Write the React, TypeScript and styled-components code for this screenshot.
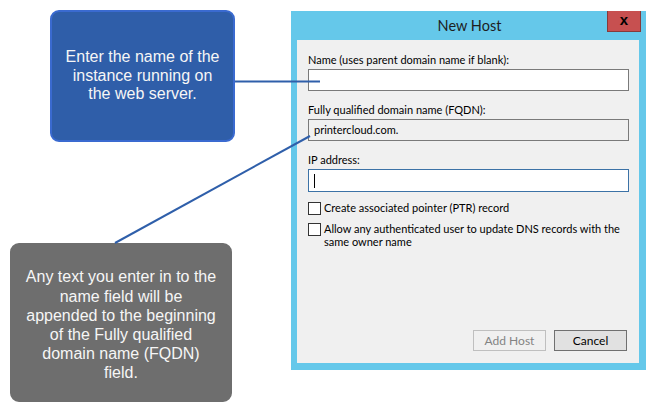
import React from 'react';
import styled, { createGlobalStyle } from 'styled-components';

const GlobalStyle = createGlobalStyle`
    html, body {
        margin: 0;
        padding: 0;
        background: #ffffff;
    }
`;

const Page = styled.div`
    position: relative;
    width: 646px;
    height: 413px;
    display: flex;
    overflow: hidden;
    background: #ffffff;
`;

const Notes = styled.div`
    width: 291px;
    display: flex;
    flex-direction: column;
`;

const Callout = styled.div<{ $tone: 'blue' | 'gray'; $w: number; $h: number; $ml: number; $mt: number }>`
    box-sizing: border-box;
    width: ${({ $w }) => $w}px;
    height: ${({ $h }) => $h}px;
    margin-left: ${({ $ml }) => $ml}px;
    margin-top: ${({ $mt }) => $mt}px;
    border-radius: 9px;
    background: ${({ $tone }) => ($tone === 'blue' ? '#2f5ea9' : '#6e6e6e')};
    border: 2px solid ${({ $tone }) => ($tone === 'blue' ? '#3a6ad0' : '#6e6e6e')};
    display: flex;
    align-items: center;
    justify-content: center;
    text-align: center;
    color: #f6f6f6;
    font-family: "Liberation Sans", Arial, sans-serif;
    font-size: 16px;
    line-height: ${({ $tone }) => ($tone === 'blue' ? '18.5px' : '19.2px')};
    padding-top: ${({ $tone }) => ($tone === 'blue' ? '0' : '5px')};
`;

const Dialog = styled.div`
    box-sizing: border-box;
    margin-top: 11px;
    width: 355px;
    height: 359px;
    background: #65c8ea;
    display: flex;
    flex-direction: column;
    font-family: Lato, "Open Sans", sans-serif;
`;

const TitleBar = styled.div`
    height: 29px;
    display: grid;
    grid-template-columns: 1fr auto 1fr;
    align-items: start;
`;

const Title = styled.div`
    grid-column: 2;
    font-size: 14.5px;
    line-height: 29px;
    color: #1e1e1e;
    padding-left: 2px;
`;

const CloseButton = styled.div`
    grid-column: 3;
    justify-self: end;
    box-sizing: border-box;
    width: 34px;
    height: 21px;
    margin-right: 5px;
    background: #c75050;
    border: 1px solid #873a3a;
    border-top: none;
    display: flex;
    align-items: center;
    justify-content: center;
    color: #000000;
    font-family: "Liberation Sans", Arial, sans-serif;
    font-weight: bold;
    font-size: 15px;
    line-height: 1;
    padding-bottom: 3px;
`;

const Panel = styled.div`
    flex: 1;
    margin: 0 7px 7px 6px;
    background: #f0f0f0;
    display: flex;
    flex-direction: column;
    padding: 12px 10px 12px 11px;
    font-size: 11px;
    color: #000000;
`;

const Label = styled.div<{ $mt?: number }>`
    line-height: 16px;
    margin-top: ${({ $mt }) => $mt ?? 0}px;
    margin-bottom: 1px;
`;

const Field = styled.div<{ $state?: 'normal' | 'readonly' | 'focused' }>`
    box-sizing: border-box;
    height: ${({ $state }) => ($state === 'focused' ? 23 : 22)}px;
    background: ${({ $state }) => ($state === 'readonly' ? '#f0f0f0' : '#ffffff')};
    border: 1px solid ${({ $state }) => ($state === 'focused' ? '#3c72a6' : '#7a7a7a')};
    display: flex;
    align-items: center;
    padding-left: 5px;
    line-height: 16px;
`;

const Caret = styled.span`
    display: block;
    width: 1px;
    height: 14px;
    background: #000000;
`;

const CheckRow = styled.label<{ $mt: number }>`
    display: flex;
    align-items: flex-start;
    gap: 3px;
    margin-top: ${({ $mt }) => $mt}px;
    line-height: 13px;
`;

const CheckText = styled.span`
    margin-top: -1px;
`;

const Box = styled.span`
    box-sizing: border-box;
    flex: none;
    width: 13px;
    height: 13px;
    border: 1px solid #333333;
    background: #ffffff;
`;

const ButtonRow = styled.div`
    margin-top: auto;
    margin-right: 2px;
    display: flex;
    justify-content: flex-end;
    gap: 8px;
`;

const Button = styled.div<{ $disabled?: boolean }>`
    box-sizing: border-box;
    width: 73px;
    height: 21px;
    display: flex;
    align-items: center;
    justify-content: center;
    font-size: 12px;
    background: ${({ $disabled }) => ($disabled ? '#f0f0f0' : '#e1e1e1')};
    border: 1px solid ${({ $disabled }) => ($disabled ? '#bfbfbf' : '#707070')};
    color: ${({ $disabled }) => ($disabled ? '#838383' : '#000000')};
`;

const Connectors = styled.svg`
    position: absolute;
    left: 0;
    top: 0;
    pointer-events: none;
`;

export default function App() {
    return (
        <>
            <GlobalStyle />
            <Page>
                <Notes>
                    <Callout $tone="blue" $w={185} $h={132} $ml={50} $mt={10}>
                        <div>
                            Enter the name of the<br />
                            instance running on<br />
                            the web server.
                        </div>
                    </Callout>
                    <Callout $tone="gray" $w={222} $h={159} $ml={10} $mt={101}>
                        <div>
                            Any text you enter in to the<br />
                            name field will be<br />
                            appended to the beginning<br />
                            of the Fully qualified<br />
                            domain name (FQDN)<br />
                            field.
                        </div>
                    </Callout>
                </Notes>

                <Dialog>
                    <TitleBar>
                        <Title>New Host</Title>
                        <CloseButton>x</CloseButton>
                    </TitleBar>
                    <Panel>
                        <Label>Name (uses parent domain name if blank):</Label>
                        <Field />
                        <Label $mt={11}>Fully qualified domain name (FQDN):</Label>
                        <Field $state="readonly">printercloud.com.</Field>
                        <Label $mt={11}>IP address:</Label>
                        <Field $state="focused">
                            <Caret />
                        </Field>
                        <CheckRow $mt={10}>
                            <Box />
                            <CheckText>Create associated pointer (PTR) record</CheckText>
                        </CheckRow>
                        <CheckRow $mt={8}>
                            <Box />
                            <CheckText>Allow any authenticated user to update DNS records with the same owner name</CheckText>
                        </CheckRow>
                        <ButtonRow>
                            <Button $disabled>Add Host</Button>
                            <Button>Cancel</Button>
                        </ButtonRow>
                    </Panel>
                </Dialog>

                <Connectors width={646} height={413} viewBox="0 0 646 413">
                    <line x1={235} y1={81.5} x2={320} y2={81.5} stroke="#2f5faa" strokeWidth={2} />
                    <line x1={115} y1={243} x2={310} y2={136} stroke="#2f5faa" strokeWidth={2} />
                </Connectors>
            </Page>
        </>
    );
}
